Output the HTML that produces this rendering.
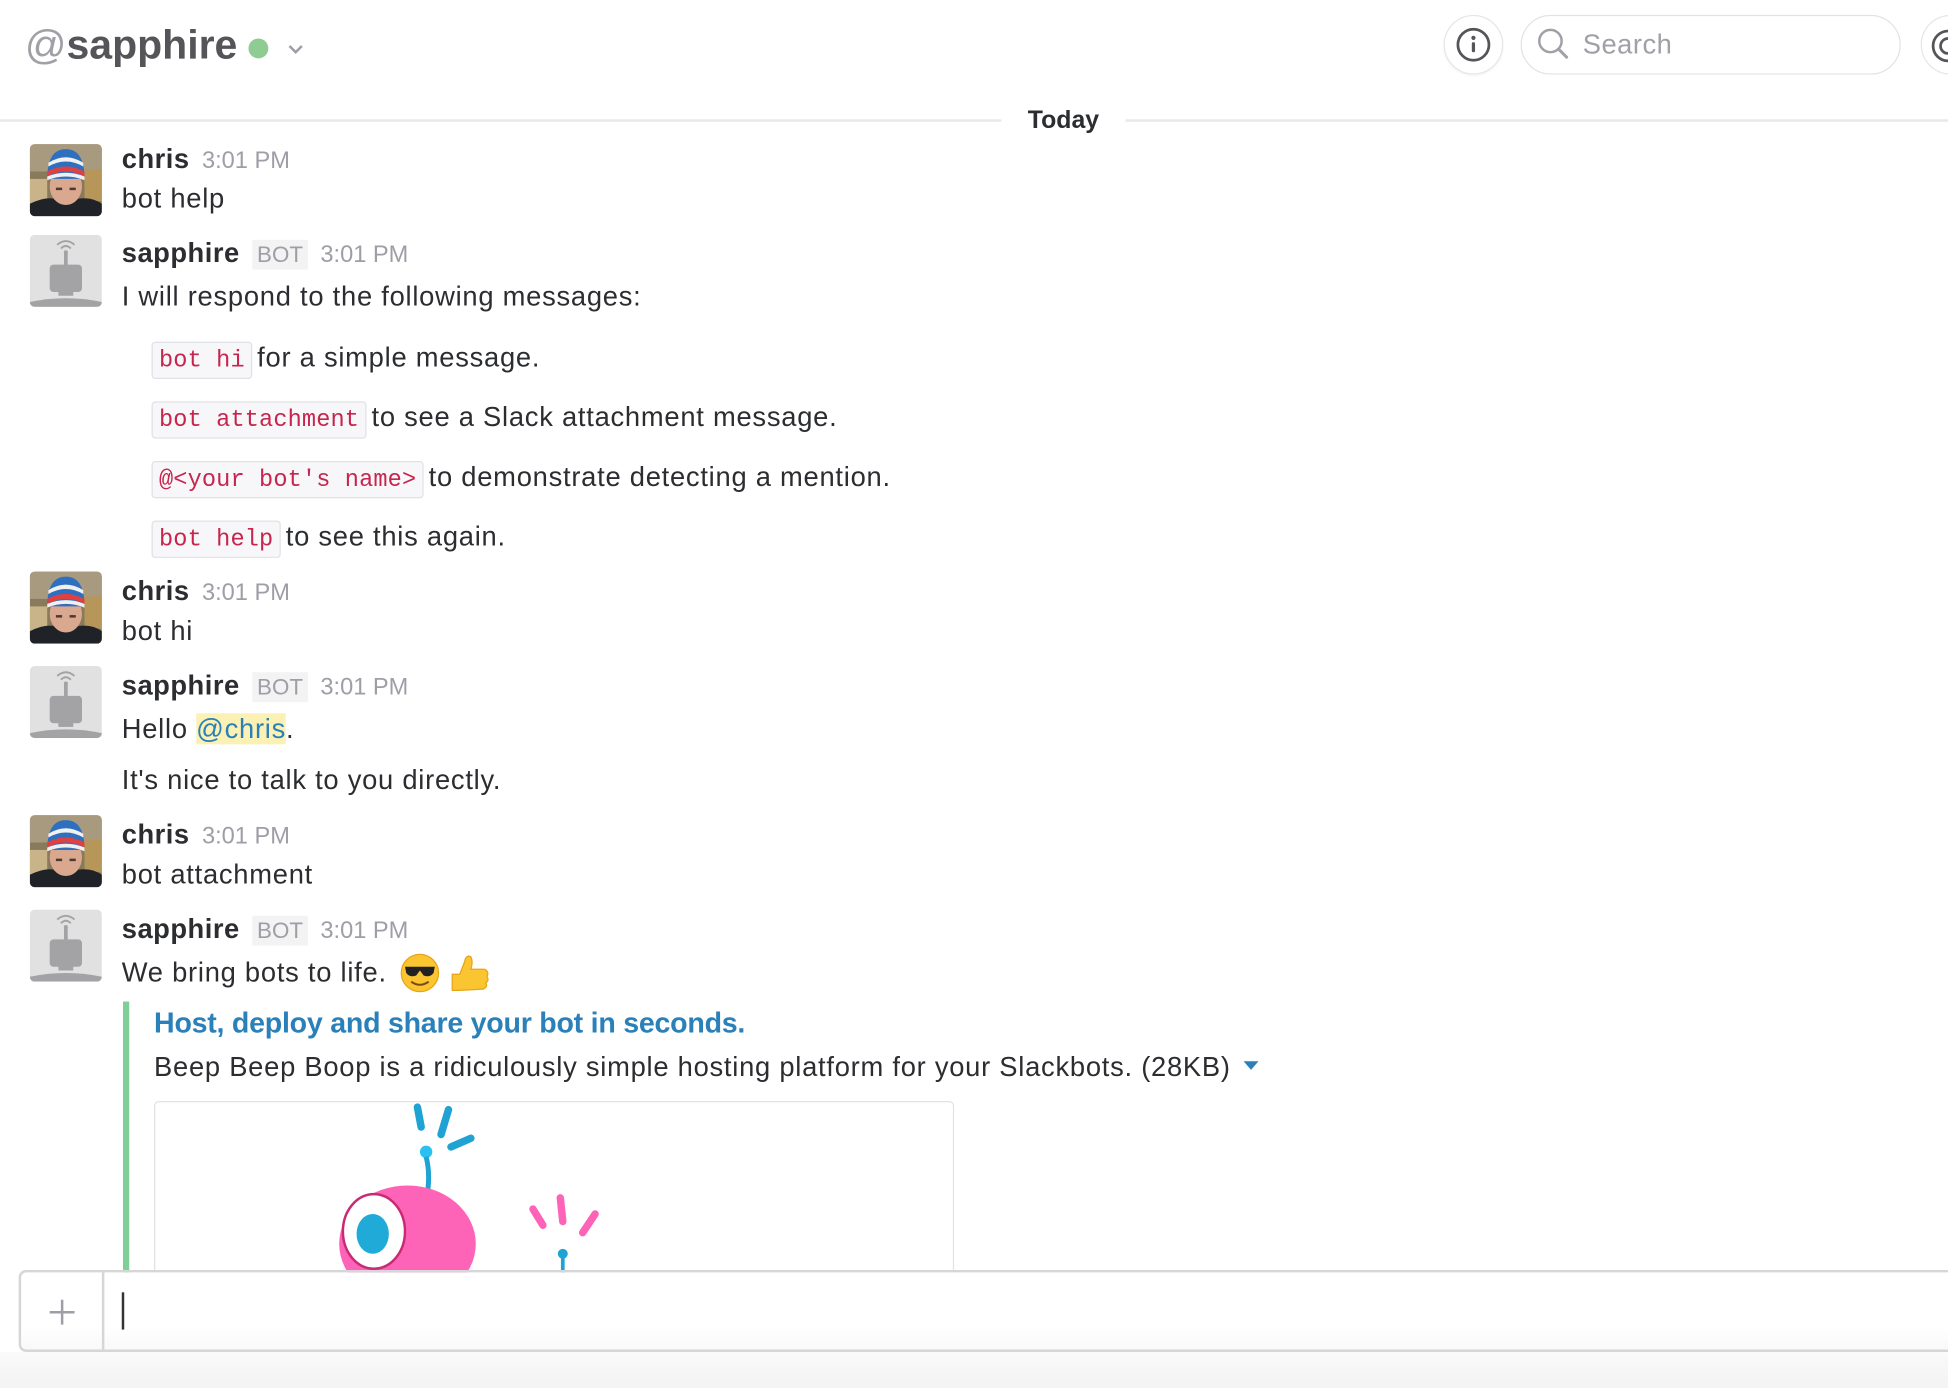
<!DOCTYPE html>
<html><head><meta charset="utf-8">
<style>
html,body{margin:0;padding:0;width:1948px;height:1388px;overflow:hidden;background:#fff;}
#w{position:absolute;left:0;top:0;width:1568px;height:1117px;transform:scale(1.24235,1.24261);transform-origin:0 0;font-family:"Liberation Sans",sans-serif;color:#2c2d30;}
.a{position:absolute;white-space:nowrap;}
.t{font-size:22px;line-height:30px;letter-spacing:0.6px;}
.n{font-weight:bold;font-size:22px;line-height:30px;letter-spacing:0.4px;color:#2c2d30;}
.tm{font-size:19px;color:#9e9ea6;font-weight:normal;letter-spacing:0;margin-left:10px;}
.bot{font-size:18px;color:#9e9ea6;background:#f3f3f3;padding:2px 4px;margin-left:10px;font-weight:normal;letter-spacing:0;}
.av{position:absolute;left:24px;width:58px;height:58px;border-radius:4px;overflow:hidden;}
code{font-family:"Liberation Mono",monospace;font-size:19px;color:#c7254e;background:#f7f7f9;border:1px solid #e1e1e8;border-radius:3px;padding:3px 5px;margin-right:4px;letter-spacing:0.1px;}
</style></head><body><div id="w">

<!-- header -->
<div class="a" style="left:20px;top:14px;font-size:33px;line-height:44px;"><span style="color:#a0a0a6">@</span><b style="color:#555459;letter-spacing:0">sapphire</b></div>
<div class="a" style="left:200px;top:31px;width:16px;height:16px;border-radius:50%;background:#8fcc94"></div>
<svg class="a" style="left:231px;top:35px" width="14" height="10"><path d="M2 2 L7 7 L12 2" stroke="#9e9ea6" stroke-width="2" fill="none"/></svg>

<div class="a" style="left:1162px;top:12px;width:46px;height:46px;border-radius:50%;border:1px solid #e6e6e6;box-shadow:0 1px 2px rgba(0,0,0,.05)"></div>
<svg class="a" style="left:1170px;top:20px" width="32" height="32"><circle cx="16" cy="16" r="12.5" stroke="#555459" stroke-width="2.2" fill="none"/><circle cx="16" cy="10.5" r="1.7" fill="#555459"/><rect x="14.7" y="14" width="2.6" height="8" rx="1" fill="#555459"/></svg>

<div class="a" style="left:1224px;top:12px;width:304px;height:46px;border-radius:24px;border:1px solid #e3e3e3"></div>
<svg class="a" style="left:1236px;top:22px" width="30" height="30"><circle cx="12" cy="11" r="9" stroke="#a0a0a6" stroke-width="2" fill="none"/><path d="M18.5 17.5 L25 24" stroke="#a0a0a6" stroke-width="2.4" stroke-linecap="round"/></svg>
<div class="a" style="left:1274px;top:20px;font-size:22px;line-height:32px;color:#a0a0a6;letter-spacing:0.4px">Search</div>

<div class="a" style="left:1546px;top:12px;width:46px;height:46px;border-radius:50%;border:1px solid #e6e6e6"></div>
<svg class="a" style="left:1552px;top:22px" width="20" height="30"><circle cx="16" cy="15" r="12" stroke="#555459" stroke-width="2.2" fill="none"/><circle cx="16" cy="15" r="6" stroke="#555459" stroke-width="2.2" fill="none"/></svg>

<!-- today divider -->
<div class="a" style="left:0;top:96px;width:1568px;height:2px;background:#e8e8e8"></div>
<div class="a" style="left:806px;top:82px;width:100px;height:30px;background:#fff;text-align:center;font-weight:bold;font-size:20px;line-height:30px;">Today</div>

<!-- avatars -->
<svg width="0" height="0" style="position:absolute"><defs>
<g id="chris"><rect width="58" height="58" fill="#8a7a5c"/><rect y="0" width="58" height="22" fill="#a89a7e"/><rect x="0" y="28" width="14" height="20" fill="#c9b48a"/><rect x="44" y="20" width="14" height="26" fill="#b7965a"/><path d="M0 58 L0 48 Q12 42 20 44 L38 44 Q50 42 58 48 L58 58Z" fill="#1f2328"/><ellipse cx="29" cy="34" rx="13" ry="15" fill="#d9a88f"/><path d="M14 28 Q14 4 29 4 Q44 4 44 28 Z" fill="#2f6fc0"/><path d="M14 22 Q29 14 44 22 L44 26 Q29 18 14 26Z" fill="#e04040"/><path d="M15 15 Q29 6 43 15 L43 18 Q29 10 15 18Z" fill="#f0f0f0"/><path d="M14 26 Q29 20 44 26 L44 29 Q29 23 14 29Z" fill="#f0f0f0"/><rect x="21" y="35" width="5" height="2" fill="#4a3a30"/><rect x="32" y="35" width="5" height="2" fill="#4a3a30"/></g>
<g id="botav"><rect width="58" height="58" fill="#e1e1e1"/><path d="M22 8 Q29 2 36 8" stroke="#a3a3a6" stroke-width="1.5" fill="none"/><path d="M25 11 Q29 7 33 11" stroke="#a3a3a6" stroke-width="1.5" fill="none"/><circle cx="29" cy="14" r="1.6" fill="#a3a3a6"/><rect x="27.5" y="14" width="3" height="11" fill="#a3a3a6"/><rect x="16" y="24" width="26" height="22" rx="3" fill="#a3a3a6"/><rect x="23" y="45" width="12" height="4" fill="#a3a3a6"/><path d="M0 58 L0 54 Q29 48 58 54 L58 58Z" fill="#a3a3a6"/></g>
</defs></svg>

<svg class="av" style="top:116px" viewBox="0 0 58 58"><use href="#chris"/></svg>
<div class="a n" style="left:98px;top:113px">chris<span class="tm">3:01 PM</span></div>
<div class="a t" style="left:98px;top:145px">bot help</div>

<svg class="av" style="top:189px" viewBox="0 0 58 58"><use href="#botav"/></svg>
<div class="a n" style="left:98px;top:189px">sapphire<span class="bot">BOT</span><span class="tm">3:01 PM</span></div>
<div class="a t" style="left:98px;top:224px">I will respond to the following messages:</div>
<div class="a t" style="left:122px;top:273px"><code>bot hi</code>for a simple message.</div>
<div class="a t" style="left:122px;top:321px"><code>bot attachment</code>to see a Slack attachment message.</div>
<div class="a t" style="left:122px;top:369px"><code>@&lt;your bot's name&gt;</code>to demonstrate detecting a mention.</div>
<div class="a t" style="left:122px;top:417px"><code>bot help</code>to see this again.</div>

<svg class="av" style="top:460px" viewBox="0 0 58 58"><use href="#chris"/></svg>
<div class="a n" style="left:98px;top:461px">chris<span class="tm">3:01 PM</span></div>
<div class="a t" style="left:98px;top:493px">bot hi</div>

<svg class="av" style="top:536px" viewBox="0 0 58 58"><use href="#botav"/></svg>
<div class="a n" style="left:98px;top:537px">sapphire<span class="bot">BOT</span><span class="tm">3:01 PM</span></div>
<div class="a t" style="left:98px;top:572px">Hello <span style="background:#fcf1b4;color:#2a80b9">@chris</span>.</div>
<div class="a t" style="left:98px;top:613px">It's nice to talk to you directly.</div>

<svg class="av" style="top:656px" viewBox="0 0 58 58"><use href="#chris"/></svg>
<div class="a n" style="left:98px;top:657px">chris<span class="tm">3:01 PM</span></div>
<div class="a t" style="left:98px;top:689px">bot attachment</div>

<svg class="av" style="top:732px" viewBox="0 0 58 58"><use href="#botav"/></svg>
<div class="a n" style="left:98px;top:733px">sapphire<span class="bot">BOT</span><span class="tm">3:01 PM</span></div>
<div class="a t" style="left:98px;top:768px">We bring bots to life.</div>
<svg class="a" style="left:322px;top:766px" width="76" height="34">
<circle cx="16" cy="17" r="15" fill="#fbc531" stroke="#e8a417" stroke-width="1"/><path d="M4 12 L28 12 L27 17 Q24 21 19 19 L16 15 L13 19 Q8 21 5 17Z" fill="#222"/><path d="M9 24 Q16 29 23 24" stroke="#7a4a10" stroke-width="1.6" fill="none"/>
<path d="M42 18 L48 18 L52 8 Q53 2 57 4 Q59 8 57 14 L68 14 Q72 16 70 20 Q72 23 69 25 Q71 28 67 30 L48 31 L42 31Z" fill="#fbc531" stroke="#e8a417" stroke-width="1"/>
</svg>

<!-- attachment -->
<div class="a" style="left:99px;top:806px;width:5px;height:220px;background:#7fcf96"></div>
<div class="a" style="left:124px;top:807px;font-size:23px;line-height:32px;font-weight:bold;color:#2a80b9;letter-spacing:-0.2px">Host, deploy and share your bot in seconds.</div>
<div class="a t" style="left:124px;top:844px">Beep Beep Boop is a ridiculously simple hosting platform for your Slackbots. (28KB)</div>
<svg class="a" style="left:1000px;top:853px" width="14" height="10"><path d="M1 1 L13 1 L7 8Z" fill="#2a80b9"/></svg>
<div class="a" style="left:124px;top:886px;width:642px;height:160px;border:1px solid #e2e2e2;border-radius:4px;background:#fff;overflow:hidden">
<svg width="642" height="160" style="position:absolute;left:-124px;top:-886px;overflow:visible">
<path d="M335 890 L338 906" stroke="#1fa3d4" stroke-width="6" stroke-linecap="round"/><path d="M360 892 L354 912" stroke="#1fa3d4" stroke-width="6" stroke-linecap="round"/><path d="M362 922 L378 915" stroke="#1fa3d4" stroke-width="6" stroke-linecap="round"/>
<circle cx="342" cy="926" r="5" fill="#2ac0ef"/><path d="M342 930 Q346 945 342 966" stroke="#1fa3d4" stroke-width="4" fill="none"/>
<ellipse cx="327" cy="1000" rx="55" ry="47" fill="#fd64b8"/><ellipse cx="300" cy="990" rx="25" ry="30" fill="#fff" stroke="#c92a75" stroke-width="2"/><ellipse cx="299" cy="992" rx="13" ry="16" fill="#1faad8"/>
<path d="M428 972 L436 985" stroke="#fd64b8" stroke-width="6" stroke-linecap="round"/><path d="M450 963 L452 982" stroke="#fd64b8" stroke-width="6" stroke-linecap="round"/><path d="M478 976 L468 991" stroke="#fd64b8" stroke-width="6" stroke-linecap="round"/>
<circle cx="452" cy="1008" r="4" fill="#1fa3d4"/><path d="M452 1008 L452 1030" stroke="#1fa3d4" stroke-width="3"/>
</svg></div>

<!-- input -->
<div class="a" style="left:0;top:1088px;width:1568px;height:29px;background:linear-gradient(#fafafa,#f3f3f3)"></div>
<div class="a" style="left:15px;top:1022px;width:1560px;height:62px;border:2px solid #d6d6d6;border-radius:6px;background:linear-gradient(#fff 70%,#f9f9f9)"></div>
<div class="a" style="left:82px;top:1024px;width:2px;height:62px;background:#d6d6d6"></div>
<svg class="a" style="left:38px;top:1044px" width="24" height="24"><path d="M12 2 V22 M2 12 H22" stroke="#9e9ea6" stroke-width="2"/></svg>
<div class="a" style="left:98px;top:1040px;width:2px;height:30px;background:#333"></div>

</div></body></html>
